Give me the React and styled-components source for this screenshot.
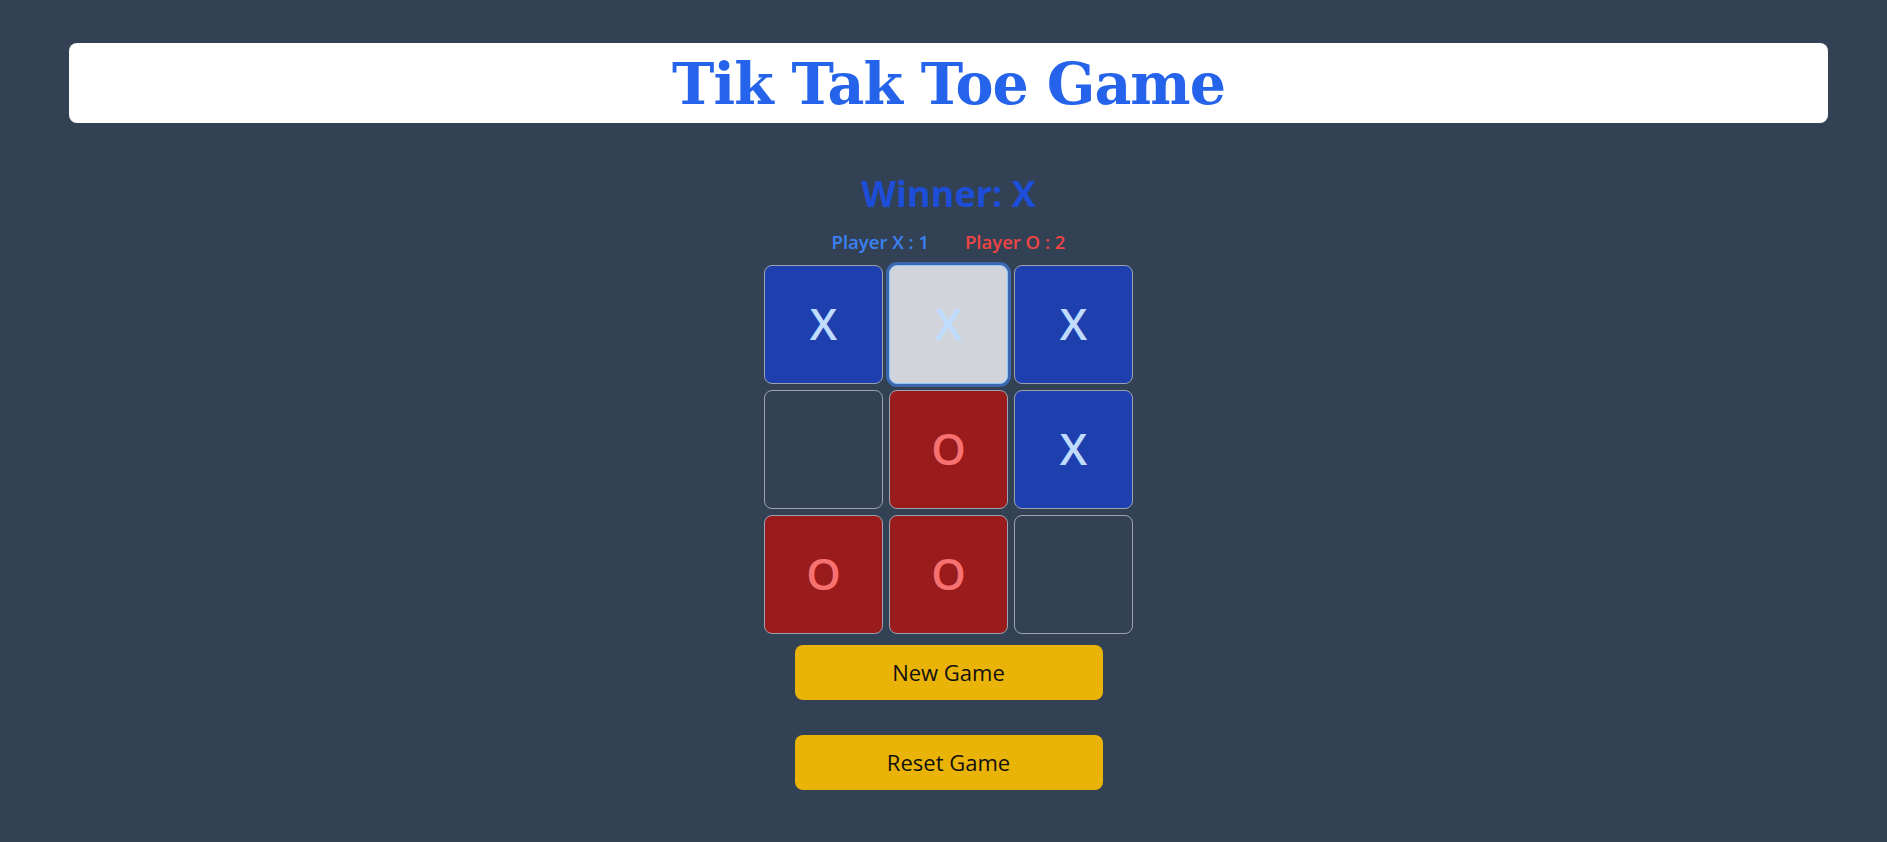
import React, { useState } from 'react';
import styled, { createGlobalStyle, css } from 'styled-components';

const GlobalStyle = createGlobalStyle`
  html, body {
    margin: 0;
    padding: 0;
    background: #334155;
  }
  body {
    font-family: "Open Sans", "Noto Sans", sans-serif;
  }
`;

const Page = styled.div`
  min-height: 100vh;
  box-sizing: border-box;
  padding: 43px 59px 40px 69px;
  background: #334155;
`;

const Header = styled.header`
  background: #ffffff;
  border-radius: 8px;
  height: 80px;
  display: flex;
  align-items: center;
  justify-content: center;
`;

const Title = styled.h1`
  margin: 0;
  font-family: "DejaVu Serif", "Liberation Serif", serif;
  font-weight: 700;
  font-size: 57px;
  line-height: 1;
  color: #2563eb;
  letter-spacing: -1px;
`;

const Main = styled.main`
  display: flex;
  flex-direction: column;
  align-items: center;
  padding-top: 48px;
`;

const Winner = styled.h2`
  margin: 0;
  font-size: 36px;
  font-weight: 700;
  line-height: 1.3;
  color: #1d4ed8;
`;

const Scores = styled.div`
  display: flex;
  gap: 36px;
  margin-top: 11px;
  font-size: 18.5px;
  font-weight: 600;
  line-height: 1.4;
`;

const Score = styled.span`
  color: ${({ $player }) => ($player === 'X' ? '#3b82f6' : '#ef4444')};
`;

const Board = styled.div`
  display: grid;
  grid-template-columns: repeat(3, 119px);
  grid-auto-rows: 119px;
  gap: 6px;
  margin-top: 10px;
`;

const Cell = styled.button`
  box-sizing: border-box;
  border: 1px solid #9ca3af;
  border-radius: 8px;
  background: transparent;
  font-family: "Open Sans", "Noto Sans", sans-serif;
  font-size: 44px;
  font-weight: 600;
  padding: 0 0 2px;
  cursor: pointer;

  ${({ $value }) =>
    $value === 'X' &&
    css`
      background: #1e40af;
      color: #bfdbfe;
    `}

  ${({ $value }) =>
    $value === 'O' &&
    css`
      background: #991b1b;
      color: #f87171;
    `}

  ${({ $focused }) =>
    $focused &&
    css`
      background: #d1d5db;
      border-color: #93c5fd;
      box-shadow: 0 0 0 3px #3a67ad;
    `}
`;

const Actions = styled.div`
  display: flex;
  flex-direction: column;
  gap: 35px;
  margin-top: 11px;
`;

const ActionButton = styled.button`
  width: 308px;
  height: 55px;
  border: none;
  border-radius: 8px;
  background: #eab308;
  color: #111111;
  font-family: "Open Sans", "Noto Sans", sans-serif;
  font-size: 22px;
  cursor: pointer;
`;

const initialBoard = ['X', 'X', 'X', '', 'O', 'X', 'O', 'O', ''];

export default function App() {
  const [board] = useState(initialBoard);
  const focusedIndex = 1;

  return (
    <Page>
      <GlobalStyle />
      <Header>
        <Title>Tik Tak Toe Game</Title>
      </Header>
      <Main>
        <Winner>Winner: X</Winner>
        <Scores>
          <Score $player="X">Player X : 1</Score>
          <Score $player="O">Player O : 2</Score>
        </Scores>
        <Board>
          {board.map((value, i) => (
            <Cell key={i} $value={value} $focused={i === focusedIndex}>
              {value}
            </Cell>
          ))}
        </Board>
        <Actions>
          <ActionButton>New Game</ActionButton>
          <ActionButton>Reset Game</ActionButton>
        </Actions>
      </Main>
    </Page>
  );
}
